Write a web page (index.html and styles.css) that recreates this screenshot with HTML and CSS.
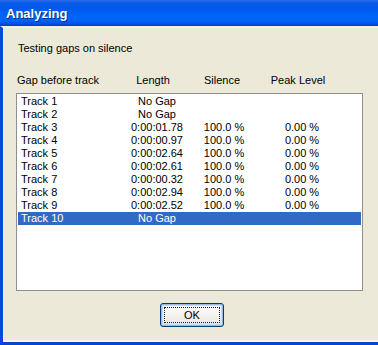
FILE: index.html
```html
<!DOCTYPE html>
<html>
<head>
<meta charset="utf-8">
<link rel="stylesheet" href="styles.css">
</head>
<body>
<div class="window">
  <div class="titlebar"><span class="title">Analyzing</span></div>
  <div class="frame">
    <div class="client">
      <div class="caption">Testing gaps on silence</div>
      <div class="header">
        <span class="h1">Gap before track</span>
        <span class="h2">Length</span>
        <span class="h3">Silence</span>
        <span class="h4">Peak Level</span>
      </div>
      <div class="list">
        <div class="row"><span class="c1">Track 1</span><span class="c2">No Gap</span><span class="c3"></span><span class="c4"></span></div>
        <div class="row"><span class="c1">Track 2</span><span class="c2">No Gap</span><span class="c3"></span><span class="c4"></span></div>
        <div class="row"><span class="c1">Track 3</span><span class="c2">0:00:01.78</span><span class="c3">100.0 %</span><span class="c4">0.00 %</span></div>
        <div class="row"><span class="c1">Track 4</span><span class="c2">0:00:00.97</span><span class="c3">100.0 %</span><span class="c4">0.00 %</span></div>
        <div class="row"><span class="c1">Track 5</span><span class="c2">0:00:02.64</span><span class="c3">100.0 %</span><span class="c4">0.00 %</span></div>
        <div class="row"><span class="c1">Track 6</span><span class="c2">0:00:02.61</span><span class="c3">100.0 %</span><span class="c4">0.00 %</span></div>
        <div class="row"><span class="c1">Track 7</span><span class="c2">0:00:00.32</span><span class="c3">100.0 %</span><span class="c4">0.00 %</span></div>
        <div class="row"><span class="c1">Track 8</span><span class="c2">0:00:02.94</span><span class="c3">100.0 %</span><span class="c4">0.00 %</span></div>
        <div class="row"><span class="c1">Track 9</span><span class="c2">0:00:02.52</span><span class="c3">100.0 %</span><span class="c4">0.00 %</span></div>
        <div class="row selected"><span class="c1">Track 10</span><span class="c2">No Gap</span><span class="c3"></span><span class="c4"></span></div>
      </div>
      <div class="buttons">
        <button class="btn"><span class="focus">OK</span></button>
      </div>
    </div>
  </div>
</div>
</body>
</html>
```

FILE: styles.css
```css
html, body {
  margin: 0;
  padding: 0;
}
body {
  width: 378px;
  height: 345px;
  overflow: hidden;
  background: #ECE9D8;
  font-family: "Liberation Sans", Arial, sans-serif;
  font-size: 11px;
  color: #000;
}
.window {
  display: flex;
  flex-direction: column;
  width: 378px;
  height: 345px;
}
.titlebar {
  height: 26px;
  flex: none;
  background: linear-gradient(to bottom, #2a6ee8 0px, #0a5ae8 3px, #0058ec 8px, #0064fa 16px, #0062f6 21px, #0050e0 24px, #003fc0 26px);
  display: flex;
  align-items: center;
  padding-left: 6px;
}
.title {
  color: #fff;
  font-weight: bold;
  font-size: 13px;
  text-shadow: 1px 1px 0 #0a2e8a;
  margin-top: 1px;
}
.frame {
  flex: 1;
  display: flex;
  border-left: 3px solid #0a48d8;
  border-bottom: 3px solid #0a44cc;
  border-top: 2px solid #f6efe6;
}
.client {
  flex: 1;
  display: flex;
  flex-direction: column;
  border-left: 1px solid #f3f1e6;
  border-bottom: 2px solid #f7f5ea;
}
.caption {
  margin-top: 14px;
  margin-left: 14px;
  line-height: 13px;
  height: 13px;
}
.header {
  margin-top: 19px;
  display: grid;
  grid-template-columns: 102px 68px 70px 82px;
  line-height: 13px;
  height: 13px;
  margin-left: 13px;
}
.h1 { text-align: left; }
.h2, .h3, .h4 { text-align: center; }
.list {
  margin-top: 6px;
  margin-left: 12px;
  width: 345px;
  height: 195px;
  background: #fff;
  border: 1px solid #8f8f8f;
  padding-top: 1px;
}
.row {
  display: grid;
  grid-template-columns: 103px 66px 68px 88px;
  height: 13px;
  line-height: 13px;
  margin: 0 1px;
  padding-left: 3px;
}
.row.selected {
  background: #316AC5;
  color: #fff;
}
.c1 { text-align: left; }
.c2, .c3, .c4 { text-align: center; }
.buttons {
  margin-top: 12px;
  display: flex;
  justify-content: center;
  padding-left: 2px;
}
.btn {
  width: 64px;
  height: 24px;
  border: 1px solid #003c74;
  border-radius: 3px;
  background: linear-gradient(to bottom, #ffffff 0%, #f4f3ee 50%, #ece9e0 85%, #d6d0c5 100%);
  box-shadow: inset 0 0 0 1px #9db9eb, inset 0 0 0 2px #c7d9f5;
  padding: 3px;
  font-family: "Liberation Sans", Arial, sans-serif;
  font-size: 11px;
  color: #000;
  display: flex;
}
.focus {
  flex: 1;
  border: 1px dotted #222;
  display: flex;
  align-items: center;
  justify-content: center;
}
```
